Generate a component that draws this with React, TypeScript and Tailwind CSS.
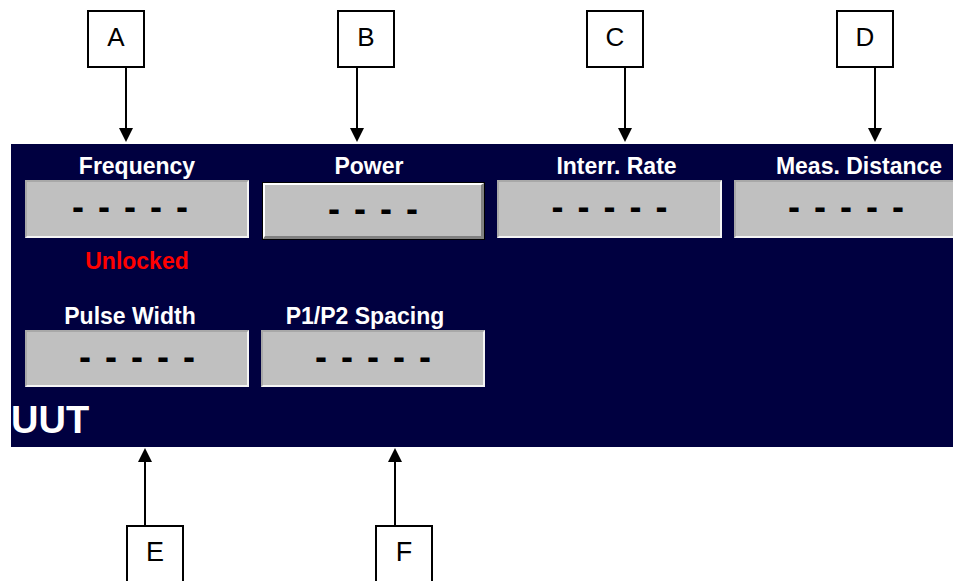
import React from "react";

const font = { fontFamily: '"Liberation Sans", Arial, sans-serif' };

function Callout({ left, letter }: { left: number; letter: string }) {
  return (
    <div
      className="absolute top-[10px] w-[58px] h-[58px] border-2 border-black flex items-center justify-center text-[26px] leading-none text-black pb-[4px]"
      style={{ left }}
    >
      {letter}
    </div>
  );
}

function BottomCallout({ left, letter }: { left: number; letter: string }) {
  return (
    <div
      className="absolute top-[78px] w-[58px] h-[90px] border-2 border-black flex justify-center text-[27px] leading-none text-black pt-[12px]"
      style={{ left }}
    >
      {letter}
    </div>
  );
}

function Dashes({ n, shift = "" }: { n: number; shift?: string }) {
  return (
    <span className={"text-[36px] font-bold leading-none tracking-[14px] mr-[-14px] text-black translate-y-[-2px] " + shift}>
      {"-".repeat(n)}
    </span>
  );
}

function Label({ text, shift = "" }: { text: string; shift?: string }) {
  return (
    <div className={"h-[28px] leading-[28px] text-[23px] font-bold text-white text-center whitespace-nowrap " + shift}>
      {text}
    </div>
  );
}

const sunken =
  "bg-[#c0c0c0] border-2 border-t-[#a8a8a8] border-l-[#a8a8a8] border-b-[#f4f4f4] border-r-[#f4f4f4] flex items-center justify-center";

export default function App() {
  return (
    <div className="w-[953px] h-[581px] bg-white overflow-hidden relative" style={font}>
      {/* top annotations */}
      <div className="relative h-[144px]">
        <Callout left={87} letter="A" />
        <Callout left={337} letter="B" />
        <Callout left={586} letter="C" />
        <Callout left={836} letter="D" />
        <svg className="absolute inset-0" width="953" height="144">
          {[126, 357, 625, 875].map((x) => (
            <g key={x}>
              <line x1={x} y1={68} x2={x} y2={130} stroke="black" strokeWidth={2} />
              <polygon points={`${x - 7},128 ${x + 7},128 ${x},142`} fill="black" />
            </g>
          ))}
        </svg>
      </div>

      {/* UUT panel */}
      <div className="ml-[11px] w-[942px] h-[303px] bg-[#000040] pt-[8px] pl-[14px] overflow-hidden flex flex-col">
        <div className="flex gap-x-[12px]">
          <div className="w-[224px] shrink-0">
            <Label text="Frequency" />
            <div className={"h-[58px] " + sunken}>
              <Dashes n={5} shift="-translate-x-[7px]" />
            </div>
            <div className="mt-[9px] h-[28px] leading-[28px] text-[23px] font-bold text-[#ff0000] text-center">
              Unlocked
            </div>
          </div>
          <div className="w-[224px] shrink-0">
            <Label text="Power" shift="-translate-x-[4px]" />
            <div className="mt-[2px] ml-[1px] h-[58px] border border-black">
              <div className="h-full bg-[#c0c0c0] border-t-2 border-l-2 border-t-white border-l-white border-b-[3px] border-r-[3px] border-b-[#808080] border-r-[#808080] flex items-center justify-center">
                <Dashes n={4} />
              </div>
            </div>
          </div>
          <div className="w-[225px] shrink-0">
            <Label text="Interr. Rate" shift="translate-x-[7px]" />
            <div className={"h-[58px] " + sunken}>
              <Dashes n={5} />
            </div>
          </div>
          <div className="w-[224px] shrink-0">
            <Label text="Meas. Distance" shift="translate-x-[13px]" />
            <div className={"h-[58px] " + sunken}>
              <Dashes n={5} />
            </div>
          </div>
        </div>
        <div className="mt-[27px] flex gap-x-[12px]">
          <div className="w-[224px] shrink-0">
            <Label text="Pulse Width" shift="-translate-x-[7px]" />
            <div className={"h-[57px] " + sunken}>
              <Dashes n={5} />
            </div>
          </div>
          <div className="w-[224px] shrink-0">
            <Label text="P1/P2 Spacing" shift="-translate-x-[8px]" />
            <div className={"h-[57px] " + sunken}>
              <Dashes n={5} />
            </div>
          </div>
        </div>
        <div className="mt-[14px] ml-[-14px] h-[38px] leading-[38px] text-[38px] font-bold text-white">
          UUT
        </div>
      </div>

      {/* bottom annotations */}
      <div className="relative h-[134px]">
        <BottomCallout left={126} letter="E" />
        <BottomCallout left={375} letter="F" />
        <svg className="absolute inset-0" width="953" height="134">
          {[145, 395].map((x) => (
            <g key={x}>
              <line x1={x} y1={12} x2={x} y2={78} stroke="black" strokeWidth={2} />
              <polygon points={`${x - 7},15 ${x + 7},15 ${x},1`} fill="black" />
            </g>
          ))}
        </svg>
      </div>
    </div>
  );
}
